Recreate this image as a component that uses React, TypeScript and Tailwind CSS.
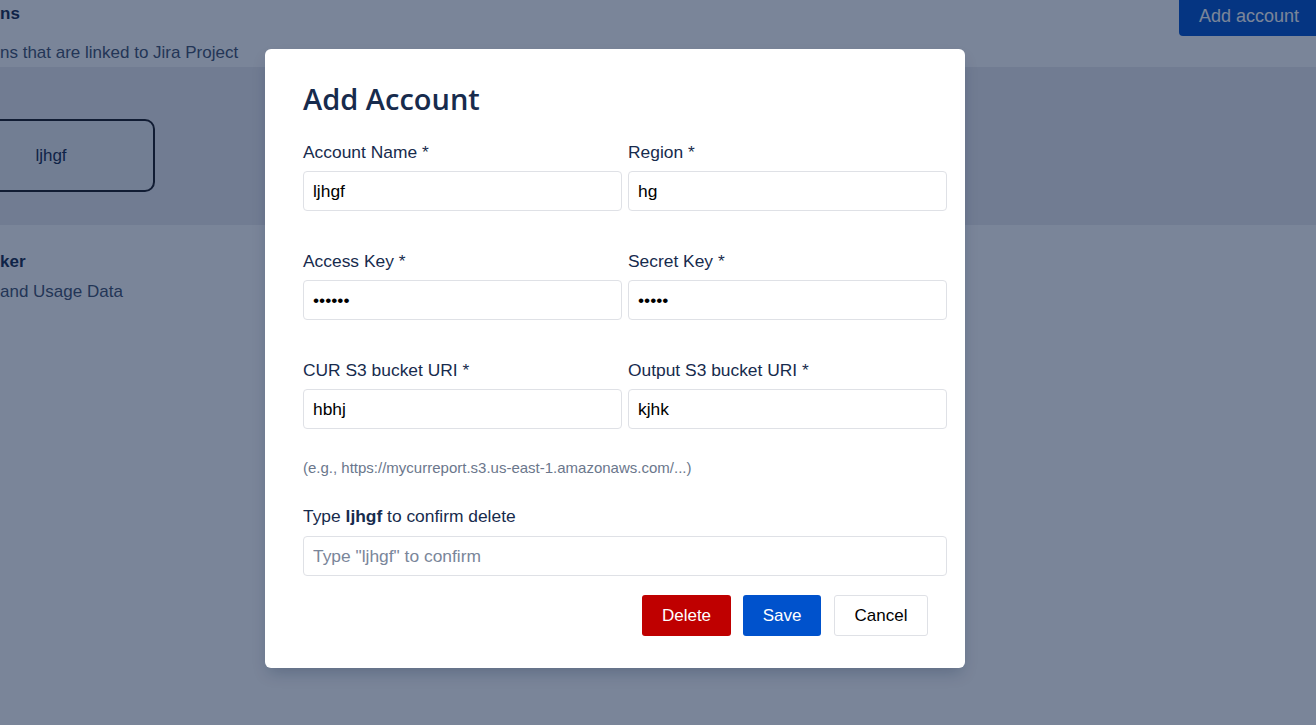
import React from "react";

function Field({ label, value, type = "text" }: { label: string; value: string; type?: string }) {
  return (
    <div className="flex flex-col">
      <label className="h-[20px] leading-[20px] text-[17.4px] text-[#172b4d] mb-[9px]">{label}</label>
      <input
        type={type}
        defaultValue={value}
        className="h-[40px] w-full rounded-[4px] border border-[#dfe1e6] bg-white px-[9px] text-[17.4px] text-black outline-none"
        style={{ fontFamily: '"Liberation Sans", Arial, sans-serif' }}
      />
    </div>
  );
}

export default function App() {
  return (
    <div
      className="relative h-[725px] w-[1316px] overflow-hidden bg-white"
      style={{ fontFamily: '"Liberation Sans", Arial, sans-serif' }}
    >
      {/* background page */}
      <div className="flex h-full flex-col">
        <div className="flex h-[67px] justify-between">
          <div className="flex flex-col">
            <div className="mt-[4px] h-[20px] text-[17px] font-bold leading-[20px] text-[#172b4d]">ns</div>
            <div className="mt-[19px] h-[20px] text-[17px] leading-[20px] text-[#42526e]">ns that are linked to Jira Project</div>
          </div>
          <div className="h-[36px] rounded-bl-[4px] bg-[#0052cc] pl-[20px] pr-[17px] text-[18px] leading-[32px] text-white">
            Add account
          </div>
        </div>
        <div className="h-[158px] bg-[#ebecf0] pt-[52px]">
          <div className="ml-[-53px] flex h-[73px] w-[208px] items-center justify-center rounded-[10px] border-2 border-[#1b1b22] bg-[#eeeff2] text-[17px] text-[#172b4d]">
            ljhgf
          </div>
        </div>
        <div className="flex flex-col">
          <div className="mt-[27px] h-[20px] text-[17px] font-bold leading-[20px] text-[#172b4d]">ker</div>
          <div className="mt-[10px] h-[20px] text-[17px] leading-[20px] text-[#42526e]">and Usage Data</div>
        </div>
      </div>

      {/* overlay */}
      <div className="absolute inset-0 bg-[rgba(9,30,66,0.54)]" />

      {/* modal */}
      <div className="absolute left-[265px] top-[49px] w-[700px] rounded-[6px] bg-white pb-[32px] pl-[38px] pr-[18px] pt-[30px] shadow-[0_8px_16px_-4px_rgba(9,30,66,0.25)]">
        <h2
          className="h-[40px] text-[29px] font-semibold leading-[40px] text-[#172b4d]"
          style={{ fontFamily: '"Open Sans", "Noto Sans", sans-serif' }}
        >
          Add Account
        </h2>
        <div className="mt-[23px] grid grid-cols-2 gap-x-[6px] gap-y-[40px]">
          <Field label="Account Name *" value="ljhgf" />
          <Field label="Region *" value="hg" />
          <Field label="Access Key *" value="abcdef" type="password" />
          <Field label="Secret Key *" value="abcde" type="password" />
          <Field label="CUR S3 bucket URI *" value="hbhj" />
          <Field label="Output S3 bucket URI *" value="kjhk" />
        </div>
        <div className="mt-[31px] h-[16px] text-[15px] leading-[16px] text-[#6b778c]">
          (e.g., https://mycurreport.s3.us-east-1.amazonaws.com/...)
        </div>
        <div className="mt-[30px] flex flex-col">
          <label className="mb-[10px] h-[20px] text-[17.4px] leading-[20px] text-[#172b4d]">
            Type <span className="font-bold">ljhgf</span> to confirm delete
          </label>
          <input
            type="text"
            placeholder='Type "ljhgf" to confirm'
            className="h-[40px] w-full rounded-[4px] border border-[#dfe1e6] bg-white px-[9px] text-[17.4px] text-black outline-none placeholder:text-[#7a869a]"
            style={{ fontFamily: '"Liberation Sans", Arial, sans-serif' }}
          />
        </div>
        <div className="mr-[19px] mt-[19px] flex justify-end">
          <button className="h-[41px] w-[89px] rounded-[3px] bg-[#bf0000] text-[17px] text-white">Delete</button>
          <button className="ml-[12px] h-[41px] w-[78px] rounded-[3px] bg-[#0052cc] text-[17px] text-white">Save</button>
          <button className="ml-[13px] h-[41px] w-[94px] rounded-[3px] border border-[#dfe1e6] bg-white text-[17px] text-black">Cancel</button>
        </div>
      </div>
    </div>
  );
}
